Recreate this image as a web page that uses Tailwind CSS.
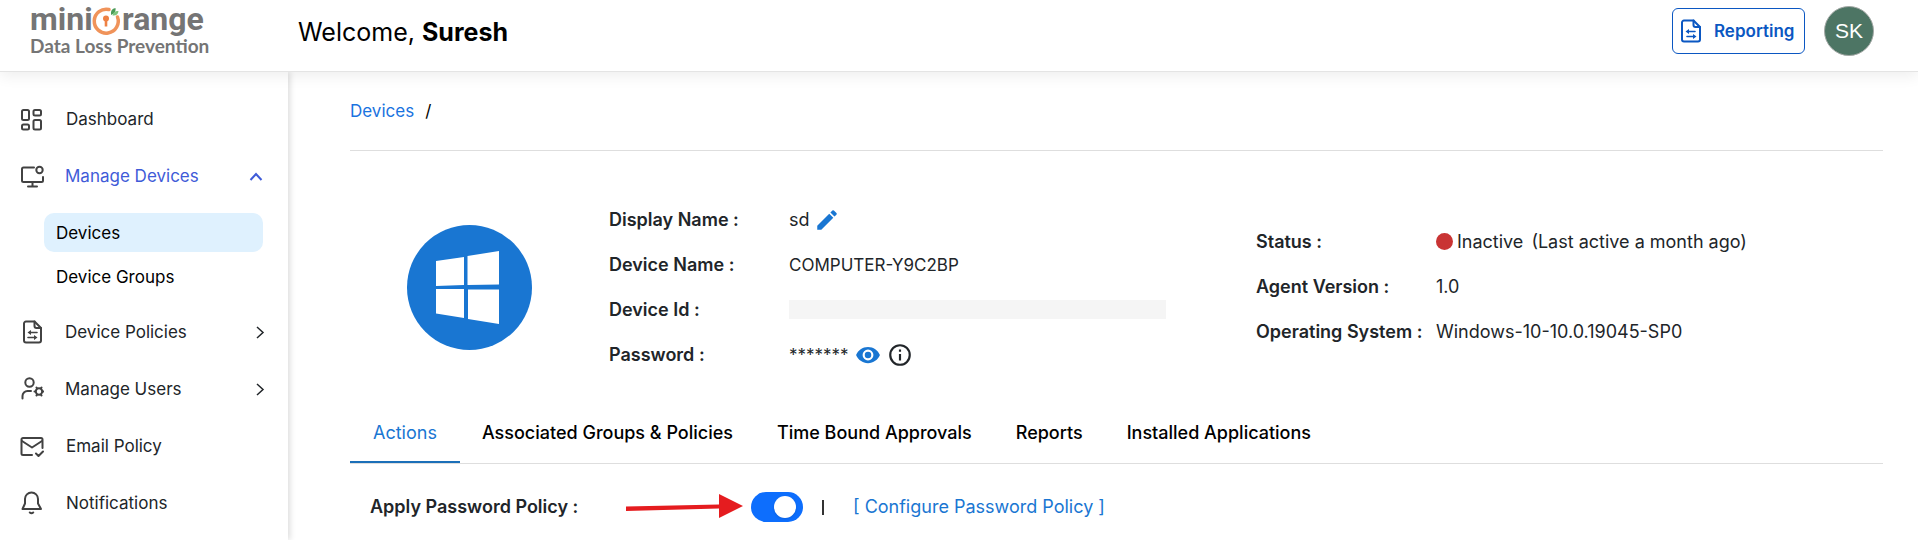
<!DOCTYPE html>
<html lang="en">

<head>
    <meta charset="UTF-8">
    <meta name="viewport" content="width=device-width, initial-scale=1.0">
    <title>miniOrange Data Loss Prevention - Devices</title>
    <script src="https://cdn.jsdelivr.net/npm/@tailwindcss/browser@4"></script>
</head>

<body class="flex flex-col h-screen overflow-hidden bg-white font-['Inter','Liberation_Sans',sans-serif] text-[17px] leading-6 text-[#212529]">

    <!-- Header -->
    <header class="relative z-10 flex items-start h-[72px] shrink-0 bg-white border-b border-[#e4e4e4] shadow-[0_4px_14px_rgba(0,0,0,0.07)]">
        <a href="#" class="w-[298px] shrink-0 pl-[30px] text-[#757575]">
            <svg class="w-[180px] h-[58px]" viewBox="0 0 180 58" role="img" aria-label="miniOrange Data Loss Prevention">
                <g fill="currentColor" font-weight="700">
                    <text x="0" y="30" font-size="32" font-family="Roboto, sans-serif">mini</text>
                    <text x="92" y="30" font-size="32" font-family="Roboto, sans-serif">range</text>
                    <text x="0" y="53" font-size="19" font-family="Lato, sans-serif">Data Loss Prevention</text>
                </g>
                <path d="M79 9.500A12 12 0 1 0 87.500 17" fill="none" stroke="#f0935a" stroke-width="3.500" stroke-linecap="round" />
                <circle cx="76" cy="18.500" r="3" fill="#ee8144" />
                <path d="M74.700 19h2.600v7.500h-2.600z" fill="#ee8144" />
                <path d="M81 15q-1-6 4.500-7q1 5-4.500 7z" fill="#4a9a58" />
                <path d="M82.500 15.500q1-5 6-4.500q-.5 5-6 4.500z" fill="#7cc47c" />
            </svg>
        </a>
        <h1 class="pt-4 text-[25px] leading-8 font-normal text-black">Welcome, <b class="font-bold">Suresh</b></h1>
        <div class="ml-auto mr-11 flex items-center gap-[19px] pt-[6px]">
            <button class="flex items-center gap-[13px] h-[46px] w-[133px] pl-2 border border-[#0b57c2] rounded-md text-[#0b57c2] font-semibold cursor-pointer">
                <svg class="w-5 h-6 shrink-0" viewBox="0 0 20 24" fill="none" stroke="currentColor" stroke-width="2" stroke-linejoin="round" stroke-linecap="round">
                    <path d="M12.500 1.500H3a2 2 0 0 0-2 2v17a2 2 0 0 0 2 2h14a2 2 0 0 0 2-2V8z" />
                    <path d="M12.500 1.500V6a2 2 0 0 0 2 2H19" />
                    <path d="M7 12.500h7M6 17.500h7" stroke-width="1.600" />
                    <path d="M8 10l-3.500 2.500L8 15zM12 15l3.500 2.500L12 20z" fill="currentColor" stroke="none" />
                </svg>
                Reporting
            </button>
            <button class="size-[50px] rounded-full bg-[#4d7564] border border-[#a3a8a5] text-white text-[21px] font-['Liberation_Sans',sans-serif] cursor-pointer">SK</button>
        </div>
    </header>

    <div class="flex flex-1 min-h-0">

        <!-- Sidebar -->
        <nav class="w-[288px] shrink-0 pt-[18px] shadow-[2px_0_6px_rgba(0,0,0,0.14)]">
            <a href="#" class="flex items-center h-[57px] pl-5">
                <svg class="size-6 text-[#424242]" viewBox="0 0 24 24" fill="none" stroke="currentColor" stroke-width="2">
                    <rect x="2" y="3" width="7" height="10" rx="1.500" />
                    <rect x="13.500" y="3" width="7.500" height="5.500" rx="1.500" />
                    <rect x="2" y="17.500" width="7" height="5" rx="1.500" />
                    <rect x="13.500" y="13" width="7.500" height="9.500" rx="1.500" />
                </svg>
                <span class="ml-[22px]">Dashboard</span>
            </a>
            <button class="flex items-center w-full h-[57px] pl-5 pr-[25px] text-[#3f5bd8] cursor-pointer">
                <svg class="size-6 text-[#424242]" viewBox="0 0 24 24" fill="none" stroke="currentColor" stroke-width="2" stroke-linecap="round">
                    <path d="M14 3.500H3.500A1.500 1.500 0 0 0 2 5v11.500A1.500 1.500 0 0 0 3.500 18h18a1.500 1.500 0 0 0 1.500-1.500V13" />
                    <path d="M12.500 18v4.500M8 22.500h9" />
                    <circle cx="19.500" cy="6" r="3.200" />
                </svg>
                <span class="ml-[21px]">Manage Devices</span>
                <svg class="ml-auto w-[14px] h-[14px]" viewBox="0 0 14 14" fill="none" stroke="currentColor" stroke-width="2">
                    <path d="M1.500 11L7 5l5.500 6" />
                </svg>
            </button>
            <div class="flex flex-col gap-[5px] pt-[9px] pb-[7px] pl-11 pr-[25px] text-black">
                <a href="#" class="flex items-center h-[39px] pl-3 rounded-[10px] bg-[#dff1fe]">Devices</a>
                <a href="#" class="flex items-center h-[39px] pl-3">Device Groups</a>
            </div>
            <button class="flex items-center w-full h-[57px] pl-[22px] pr-[23px] cursor-pointer">
                <svg class="w-5 h-6 text-[#424242]" viewBox="0 0 20 24" fill="none" stroke="currentColor" stroke-width="2" stroke-linejoin="round" stroke-linecap="round">
                    <path d="M12.500 1.500H4a2 2 0 0 0-2 2v17a2 2 0 0 0 2 2h13a2 2 0 0 0 2-2V8z" />
                    <path d="M12.500 1.500V6a2 2 0 0 0 2 2H19" />
                    <path d="M8 12.500h7M6 17.500h7" stroke-width="1.600" />
                    <path d="M9 10l-3.500 2.500L9 15zM12 15l3.500 2.500L12 20z" fill="currentColor" stroke="none" />
                </svg>
                <span class="ml-[23px]">Device Policies</span>
                <svg class="ml-auto w-[10px] h-[14px]" viewBox="0 0 10 14" fill="none" stroke="currentColor" stroke-width="1.500">
                    <path d="M2 2l6 5.500L2 13" />
                </svg>
            </button>
            <button class="flex items-center w-full h-[57px] pl-5 pr-[23px] cursor-pointer">
                <svg class="size-6 text-[#424242]" viewBox="0 0 24 24" fill="none" stroke="currentColor" stroke-width="2" stroke-linecap="round">
                    <circle cx="9.500" cy="5.500" r="4.200" />
                    <path d="M2.500 21.500V19a5 5 0 0 1 5-5H11" />
                    <circle cx="19" cy="14.500" r="3.200" />
                    <path d="M16.500 10.500l.6 1M21.500 10.500l-.6 1M16.500 18.500l.6-1M21.500 18.500l-.6-1M14.500 14.500h.8M22.700 14.500h.8" />
                </svg>
                <span class="ml-[21px]">Manage Users</span>
                <svg class="ml-auto w-[10px] h-[14px]" viewBox="0 0 10 14" fill="none" stroke="currentColor" stroke-width="1.500">
                    <path d="M2 2l6 5.500L2 13" />
                </svg>
            </button>
            <a href="#" class="flex items-center h-[57px] pl-5">
                <svg class="size-6 text-[#424242]" viewBox="0 0 24 24" fill="none" stroke="currentColor" stroke-width="2" stroke-linecap="round" stroke-linejoin="round">
                    <path d="M12 21H3a1.500 1.500 0 0 1-1.500-1.500v-14A1.500 1.500 0 0 1 3 4h18a1.500 1.500 0 0 1 1.500 1.500V14" />
                    <path d="M2 7l10 6.500L22 7" />
                    <path d="M16 19.500l2.500 2.500 4.500-4.500" />
                </svg>
                <span class="ml-[22px]">Email Policy</span>
            </a>
            <a href="#" class="flex items-center h-[57px] pl-5">
                <svg class="size-6 text-[#424242]" viewBox="0 0 24 24" fill="none" stroke="currentColor" stroke-width="2" stroke-linecap="round" stroke-linejoin="round">
                    <path d="M11.500 1.500a6.500 6.500 0 0 0-6.500 6.500v4.500L2.500 18h18.500L18 12.500V8a6.500 6.500 0 0 0-6.500-6.500z" />
                    <path d="M9.800 21.500q1.700 1.500 3.400 0" />
                </svg>
                <span class="ml-[22px]">Notifications</span>
            </a>
        </nav>

        <!-- Content -->
        <main class="flex-1 min-w-0 pl-[62px] pr-[35px] text-[18px]">
            <div class="flex items-center gap-[11px] h-[79px] border-b border-[#dedede] text-[17px] text-[#1a73e0]">
                <a href="#">Devices</a>
                <span class="text-black">/</span>
            </div>

            <section class="flex h-[251px] pt-[46px]">
                <div class="w-[259px] shrink-0 pl-[57px] pt-7">
                    <svg class="size-[125px]" viewBox="0 0 125 125">
                        <circle cx="62.500" cy="62.500" r="62.500" fill="#1976d2" />
                        <g fill="#fff">
                            <path d="M29 36l28-4v28l-28 1zM60.500 31L92 26v33.500l-31.500.5zM29 64h28v29l-28-4.500zM61 64.500h31V99l-31-5z" />
                        </g>
                    </svg>
                </div>
                <dl class="w-[647px] shrink-0 grid grid-cols-[180px_1fr] auto-rows-[45px] content-start items-center">
                    <dt class="font-semibold">Display Name :</dt>
                    <dd class="flex items-center gap-1">
                        sd
                        <button aria-label="Edit display name" class="cursor-pointer text-[#1976d2]">
                            <svg class="size-[26px]" viewBox="0 0 24 24" fill="currentColor">
                                <path d="M3 17.250V21h3.750L17.810 9.940l-3.750-3.750L3 17.250zM20.710 7.040a1 1 0 0 0 0-1.410l-2.340-2.340a1 1 0 0 0-1.410 0l-1.830 1.830 3.750 3.750 1.830-1.830z" />
                            </svg>
                        </button>
                    </dd>
                    <dt class="font-semibold">Device Name :</dt>
                    <dd class="text-[17px]">COMPUTER-Y9C2BP</dd>
                    <dt class="font-semibold">Device Id :</dt>
                    <dd><div class="w-[377px] h-[19px] bg-[#f5f5f5]"></div></dd>
                    <dt class="font-semibold">Password :</dt>
                    <dd class="flex items-center gap-[6px] text-[17px]">
                        <span>*******</span>
                        <button aria-label="Show password" class="cursor-pointer text-[#1976d2]">
                            <svg class="size-[26px]" viewBox="0 0 24 24" fill="currentColor">
                                <path d="M12 4.500C7 4.500 2.730 7.610 1 12c1.730 4.390 6 7.500 11 7.500s9.270-3.110 11-7.500c-1.730-4.390-6-7.500-11-7.500zM12 17a5 5 0 1 1 0-10 5 5 0 0 1 0 10zm0-8a3 3 0 1 0 0 6 3 3 0 0 0 0-6z" />
                            </svg>
                        </button>
                        <button aria-label="Password info" class="cursor-pointer">
                            <svg class="size-[26px]" viewBox="0 0 24 24" fill="currentColor">
                                <path d="M11 7h2v2h-2zm0 4h2v6h-2zm1-9a10 10 0 1 0 0 20 10 10 0 0 0 0-20zm0 18a8 8 0 1 1 0-16 8 8 0 0 1 0 16z" />
                            </svg>
                        </button>
                    </dd>
                </dl>
                <dl class="flex-1 grid grid-cols-[180px_1fr] auto-rows-[45px] content-start items-center pt-[22px] whitespace-nowrap">
                    <dt class="font-semibold">Status :</dt>
                    <dd class="flex items-center">
                        <span class="size-[17px] mr-1 rounded-full bg-[#c93434]"></span>
                        <span class="mr-2">Inactive</span>
                        <span>(Last active a month ago)</span>
                    </dd>
                    <dt class="font-semibold">Agent Version :</dt>
                    <dd>1.0</dd>
                    <dt class="font-semibold">Operating System :</dt>
                    <dd>Windows-10-10.0.19045-SP0</dd>
                </dl>
            </section>

            <!-- Tabs -->
            <div role="tablist" class="flex h-[62px] border-b border-[#dedede] font-medium text-black whitespace-nowrap">
                <button role="tab" aria-selected="true" class="px-[23px] pt-[2px] border-b-2 border-[#1b6fb8] text-[#1976d2] font-normal cursor-pointer">Actions</button>
                <button role="tab" class="px-[22px] cursor-pointer">Associated Groups &amp; Policies</button>
                <button role="tab" class="px-[22px] cursor-pointer">Time Bound Approvals</button>
                <button role="tab" class="px-[22px] cursor-pointer">Reports</button>
                <button role="tab" class="px-[22px] cursor-pointer">Installed Applications</button>
            </div>

            <div class="flex items-center h-[86px] pl-5">
                <label for="passwordPolicy" class="w-[256px] font-semibold">Apply Password Policy :</label>
                <svg class="w-[117px] h-[26px]" viewBox="0 0 117 26" fill="#e51c1f">
                    <path d="M0 12.500l93-2V0l24 12-24 12V14.500L0 17z" />
                </svg>
                <input type="checkbox" role="switch" id="passwordPolicy" checked
                    class="appearance-none ml-2 w-[52px] h-[30px] rounded-full bg-gray-400 checked:bg-[#0d6efd] cursor-pointer before:block before:size-[22px] before:mt-1 before:ml-1 before:rounded-full before:bg-white before:shadow-sm checked:before:ml-[23px]">
                <span class="ml-[19px] w-[2px] h-[15px] bg-[#333]"></span>
                <a href="#" class="ml-[29px] text-[#1976d2]">[ Configure Password Policy ]</a>
            </div>
        </main>
    </div>

</body>

</html>
